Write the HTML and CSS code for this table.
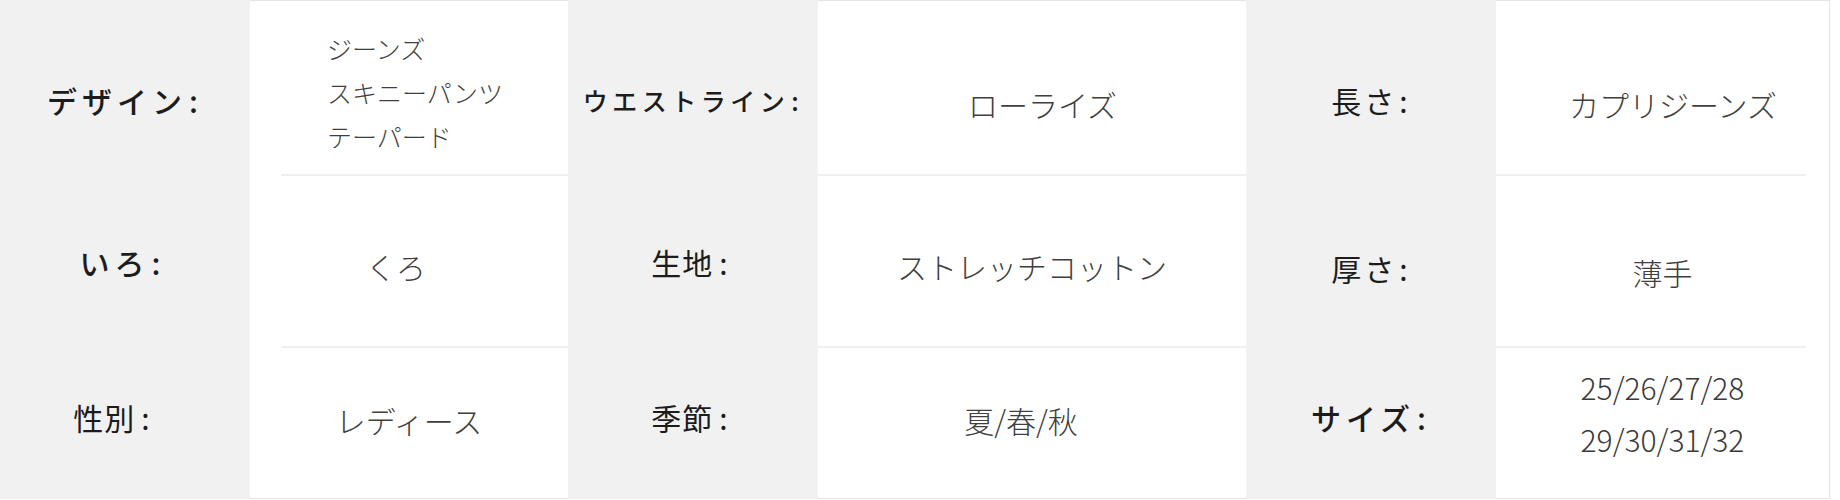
FILE: index.html
```html
<!DOCTYPE html>
<html lang="ja">
<head>
<meta charset="utf-8">
<title>商品仕様</title>
<link rel="stylesheet" href="styles.css">
</head>
<body>
<div class="spec">
  <div class="lab r1t kana">デザイン<span class="colon">:</span></div>
  <div class="val top c1 sep r1list">
    <ul class="list">
      <li>ジーンズ</li>
      <li>スキニーパンツ</li>
      <li>テーパード</li>
    </ul>
  </div>
  <div class="lab r1t waist">ウエストライン<span class="colon">:</span></div>
  <div class="val top sep r1v nudge-r">ローライズ</div>
  <div class="lab r1t mid">長さ<span class="colon">:</span></div>
  <div class="val top c3 sep r1v nudge-r">カプリジーンズ</div>

  <div class="lab kana nudge-s">いろ<span class="colon">:</span></div>
  <div class="val c1 sep r2v nudge-l">くろ</div>
  <div class="lab kanji">生地<span class="colon">:</span></div>
  <div class="val sep r2v">ストレッチコットン</div>
  <div class="lab mid r2t3">厚さ<span class="colon">:</span></div>
  <div class="val c3 sep r2v3">薄手</div>

  <div class="lab kanji r3t nudge-l">性別<span class="colon">:</span></div>
  <div class="val bottom r3v">レディース</div>
  <div class="lab kanji r3t">季節<span class="colon">:</span></div>
  <div class="val bottom r3v nudge-m">夏/春/秋</div>
  <div class="lab kana r3t">サイズ<span class="colon">:</span></div>
  <div class="val bottom c3 r3sizes">
    <ul class="sizes">
      <li>25/26/27/28</li>
      <li>29/30/31/32</li>
    </ul>
  </div>
</div>
</body>
</html>
```

FILE: styles.css
```css
html, body {
  margin: 0;
  padding: 0;
  background: #ffffff;
}

body {
  font-family: "Noto Sans CJK JP", "Noto Sans", sans-serif;
}

.spec {
  display: grid;
  grid-template-columns: 250px 318px 250px 428px 250px 334px;
  grid-template-rows: 176px 172px 151px;
  width: 1830px;
}

.lab {
  box-sizing: border-box;
  background: #f1f1f1;
  display: flex;
  align-items: center;
  justify-content: center;
  font-size: 30px;
  font-weight: 500;
  color: #1c1c1c;
  letter-spacing: 5px;
  white-space: nowrap;
}

.lab.kana { letter-spacing: 5px; }
.lab.mid {
  letter-spacing: 3px;
  font-weight: 400;
}
.lab.kanji {
  letter-spacing: 1px;
  font-weight: 400;
  padding-right: 6px;
}
.lab.kanji .colon { margin-left: 6px; }
.lab.waist {
  font-size: 25px;
  letter-spacing: 4.5px;
}

.colon {
  margin-left: 2px;
}

.val {
  box-sizing: border-box;
  display: flex;
  align-items: center;
  justify-content: center;
  font-family: "Noto Sans CJK JP Light", "Noto Sans CJK JP DemiLight", "Noto Sans CJK JP", sans-serif;
  font-size: 30px;
  font-weight: 300;
  color: #3f3f3f;
  white-space: nowrap;
}

.val.top { border-top: 1px solid #e4e4e4; }
.val.bottom { border-bottom: 1px solid #e4e4e4; }
.val.c3 { border-right: 1px solid #e4e4e4; }

.val.sep {
  background-image: linear-gradient(#efefef, #efefef);
  background-repeat: no-repeat;
  background-size: 100% 2px;
  background-position: left bottom;
}
.val.sep.c1 {
  background-size: calc(100% - 31px) 2px;
  background-position: right bottom;
}
.val.sep.c3 {
  background-size: calc(100% - 23px) 2px;
  background-position: left bottom;
}

/* vertical offsets */
.r1t { padding-top: 24px; }
.r1v { padding-top: 30px; }
.r1list { padding-top: 7px; padding-left: 12px; }
.r2v { padding-top: 7px; }
.r2t3 { padding-top: 12px; }
.r2v3 { padding-top: 20px; }
.r3t { padding-bottom: 13px; }
.r3v { padding-bottom: 7px; }
.r3sizes { padding-bottom: 20px; }

/* horizontal nudges, read from the reference */
.nudge-s { padding-right: 5px; }
.nudge-m { padding-right: 22px; }
.nudge-r { padding-left: 21px; }
.lab.nudge-l, .val.nudge-l { padding-right: 26px; }

.list, .sizes {
  list-style: none;
  margin: 0;
  padding: 0;
}

.list {
  font-size: 25px;
  line-height: 44px;
  text-align: left;
}

.sizes {
  font-size: 30px;
  line-height: 52px;
  text-align: center;
  color: #3a3a3a;
}
```
